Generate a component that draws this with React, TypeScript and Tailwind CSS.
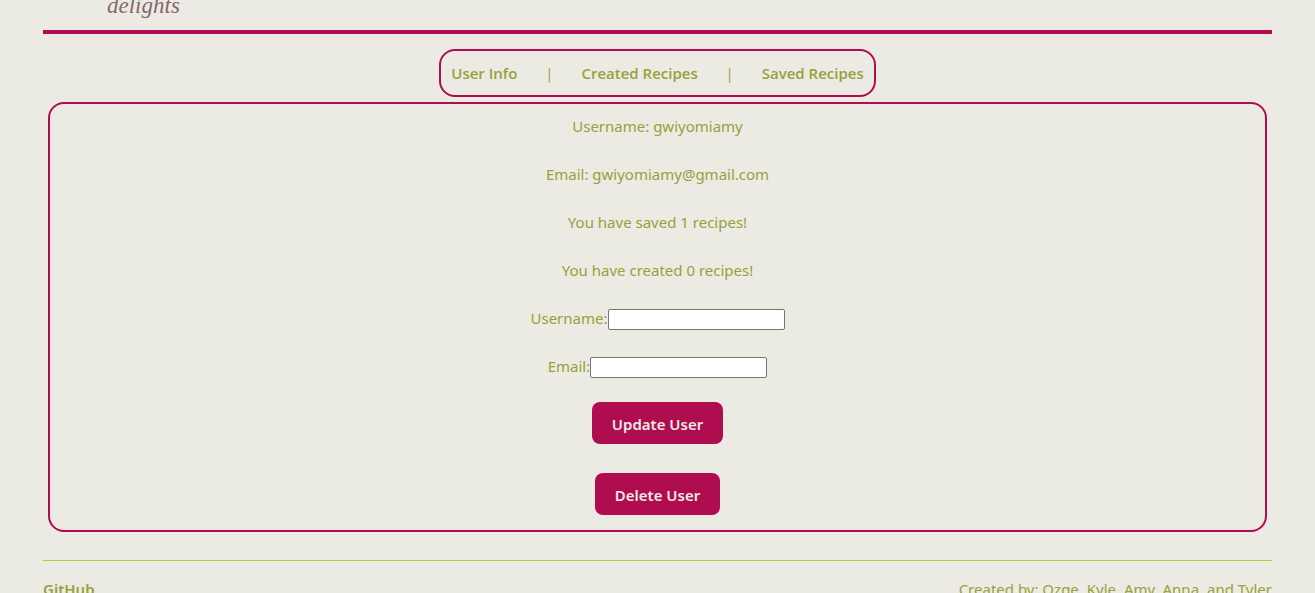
import React from "react";

const tabs = ["User Info", "Created Recipes", "Saved Recipes"];

const facts = [
  "Username: gwiyomiamy",
  "Email: gwiyomiamy@gmail.com",
  "You have saved 1 recipes!",
  "You have created 0 recipes!",
];

function Field({ id, label, type }: { id: string; label: string; type: string }) {
  return (
    <div className="flex h-6 items-center">
      <label htmlFor={id}>{label}</label>
      <input
        id={id}
        type={type}
        className="mt-[3px] h-[21px] w-[177px] rounded-xs border border-[#767676] bg-white px-0.5 text-[13px] text-black"
      />
    </div>
  );
}

function ActionButton({ children }: { children: React.ReactNode }) {
  return (
    <button
      type="button"
      className="h-[42px] rounded-lg bg-[#b00c50] px-5 pt-0.5 font-semibold text-[#ecebe3]"
    >
      {children}
    </button>
  );
}

export default function App() {
  return (
    <div className="h-screen overflow-hidden bg-[#ecebe3] px-[43px] font-['Noto_Sans','Open_Sans',sans-serif] text-[15px] leading-6 text-[#98a03c]">
      <header className="flex h-[34px] items-end border-b-4 border-[#b00c50] pb-3 pl-16">
        <span className="font-['Liberation_Serif',cursive] text-[23px] leading-6 text-[#87656b] italic">
          delights
        </span>
      </header>

      <nav className="mx-auto mt-[15px] flex h-12 w-fit items-center rounded-2xl border-2 border-[#b00c50] px-2.5 font-['Open_Sans',sans-serif] font-semibold">
        {tabs.map((tab, i) => (
          <React.Fragment key={tab}>
            {i > 0 && <span className="w-16 text-center font-normal">|</span>}
            <a href="#">{tab}</a>
          </React.Fragment>
        ))}
      </nav>

      <main className="mx-[5px] mt-[5px] flex flex-col items-center rounded-2xl border-2 border-[#b00c50] px-2.5 pt-2.5 pb-[15px]">
        <div className="flex flex-col items-center gap-6">
          {facts.map((fact) => (
            <p key={fact}>{fact}</p>
          ))}
        </div>
        <form className="mt-6 flex flex-col items-center gap-6">
          <Field id="username" label="Username:" type="text" />
          <Field id="email" label="Email:" type="email" />
          <ActionButton>Update User</ActionButton>
        </form>
        <div className="mt-[29px] flex">
          <ActionButton>Delete User</ActionButton>
        </div>
      </main>

      <footer className="mt-7 flex justify-between border-t border-[#b5cc45] pt-4">
        <a href="#" className="font-semibold">
          GitHub
        </a>
        <p>Created by: Ozge, Kyle, Amy, Anna, and Tyler</p>
      </footer>
    </div>
  );
}
